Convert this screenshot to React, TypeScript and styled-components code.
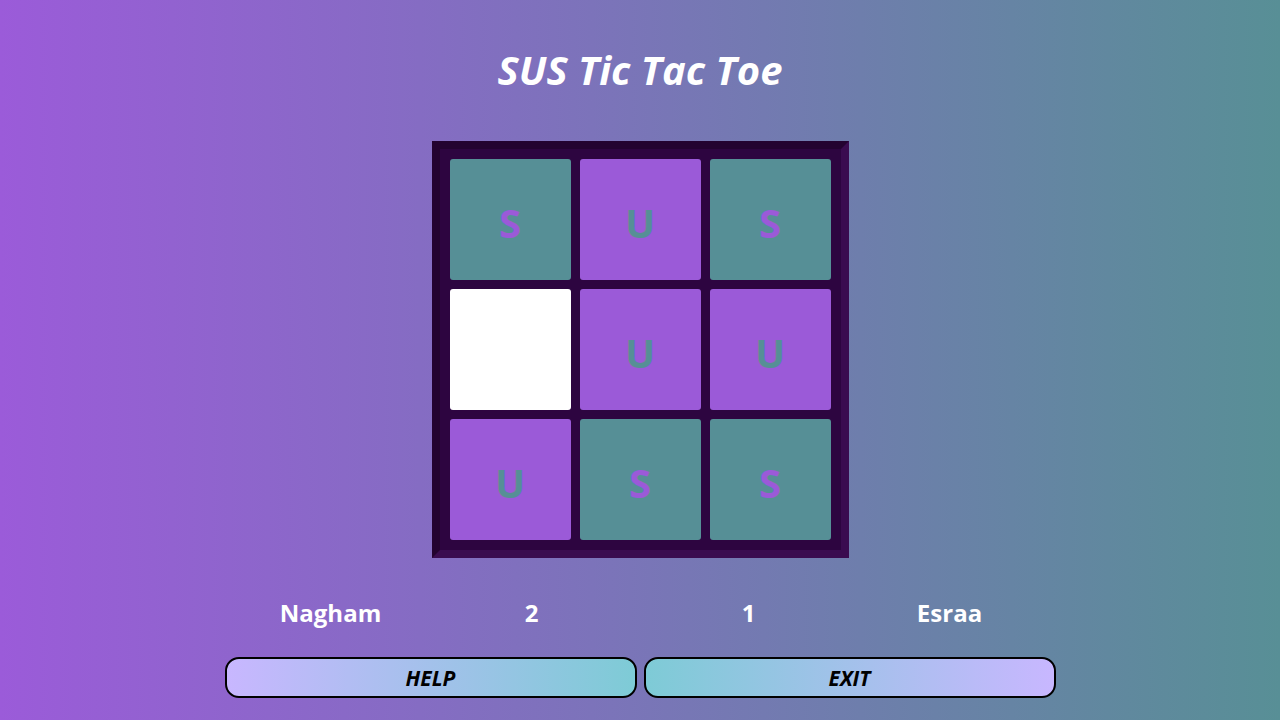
import React from 'react';
import styled, { createGlobalStyle } from 'styled-components';

const GlobalStyle = createGlobalStyle`
	html, body {
		margin: 0;
		padding: 0;
		height: 100%;
	}
	body {
		font-family: 'Open Sans', 'Noto Sans', sans-serif;
		background: linear-gradient(to right, #9b5bd9, #588f96);
	}
`;

const Page = styled.div`
	width: 1280px;
	height: 720px;
	display: flex;
	flex-direction: column;
	align-items: center;
	box-sizing: border-box;
	padding-top: 43px;
`;

const Title = styled.h1`
	margin: 0;
	color: white;
	font-size: 40px;
	font-style: italic;
	font-weight: 700;
	line-height: 53px;
`;

const Board = styled.div`
	margin-top: 45px;
	display: grid;
	grid-template-columns: repeat(3, 121px);
	grid-template-rows: repeat(3, 121px);
	gap: 9px;
	padding: 10px;
	background-color: #2d0540;
	border: 8px solid;
	border-color: #230330 #3a0c50 #3a0c50 #230330;
`;

type Mark = 'S' | 'U' | '';

const cellBg = (m: Mark) => (m === 'S' ? '#568f96' : m === 'U' ? '#9b5ad8' : '#ffffff');
const cellFg = (m: Mark) => (m === 'S' ? '#9b5ad8' : '#568f96');

const Cell = styled.div<{ $mark: Mark }>`
	border-radius: 3px;
	background-color: ${p => cellBg(p.$mark)};
	color: ${p => cellFg(p.$mark)};
	display: flex;
	align-items: center;
	justify-content: center;
	font-size: 40px;
	font-weight: 700;
	padding-top: 6px;
	box-sizing: border-box;
`;

const Scores = styled.div`
	margin-top: 38px;
	display: flex;
	gap: 16px;
	color: white;
	font-size: 24px;
	font-weight: 700;
	line-height: 34px;
	text-align: center;
`;

const PlayerScore = styled.div`
	display: grid;
	grid-template-columns: repeat(2, 201px);
`;

const Buttons = styled.div`
	margin-top: 27px;
	display: flex;
	gap: 7px;
`;

const Button = styled.button<{ $reverse?: boolean }>`
	width: 412px;
	height: 41px;
	border: 2px solid #000;
	border-radius: 14px;
	background: linear-gradient(
		to ${p => (p.$reverse ? 'left' : 'right')},
		#c8b7ff,
		#7ecbd6
	);
	font-family: 'Open Sans', 'Noto Sans', sans-serif;
	font-size: 21px;
	font-weight: 700;
	font-style: italic;
	color: #000;
	padding: 0;
	cursor: pointer;
`;

const board: Mark[] = ['S', 'U', 'S', '', 'U', 'U', 'U', 'S', 'S'];

export default function App() {
	return (
		<>
			<GlobalStyle />
			<Page>
				<Title>SUS Tic Tac Toe</Title>
				<Board>
					{board.map((m, i) => (
						<Cell key={i} $mark={m}>
							{m}
						</Cell>
					))}
				</Board>
				<Scores>
					<PlayerScore>
						<span>Nagham</span>
						<span>2</span>
					</PlayerScore>
					<PlayerScore>
						<span>1</span>
						<span>Esraa</span>
					</PlayerScore>
				</Scores>
				<Buttons>
					<Button>HELP</Button>
					<Button $reverse>EXIT</Button>
				</Buttons>
			</Page>
		</>
	);
}
